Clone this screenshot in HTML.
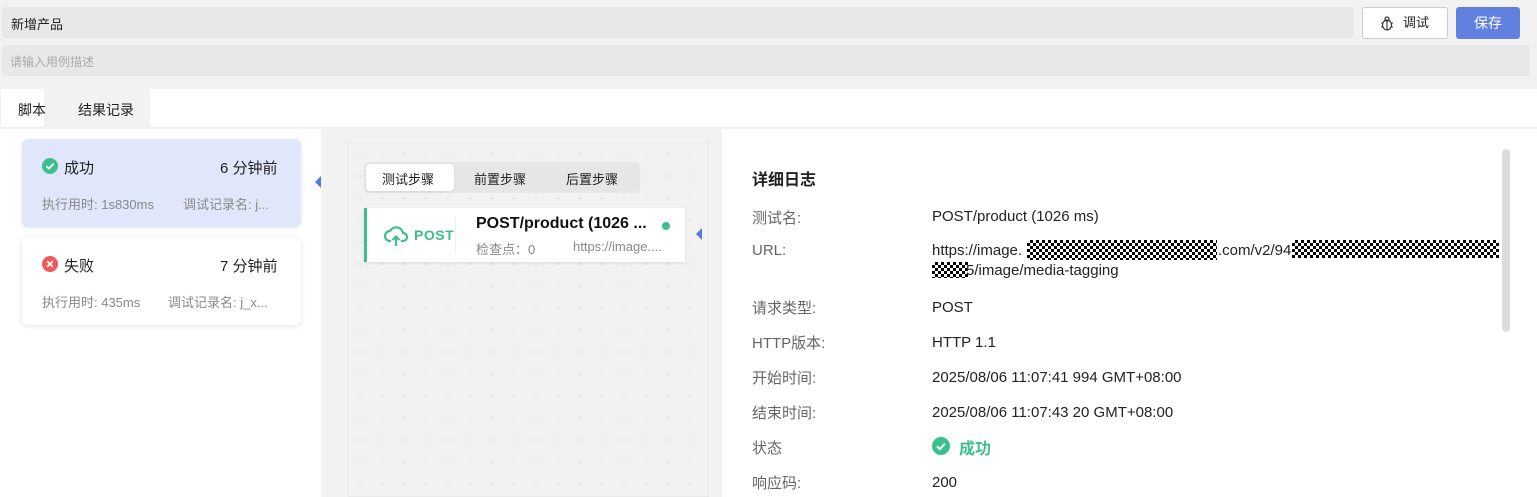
<!DOCTYPE html>
<html><head><meta charset="utf-8"><style>
*{box-sizing:border-box;margin:0;padding:0}
body{width:1537px;height:497px;overflow:hidden;background:#f2f2f2;font-family:"Liberation Sans","Noto Sans CJK SC",sans-serif;position:relative;color:#222}
.abs{position:absolute}
.inp{background:#e8e8e8;border-radius:4px}
.chk{position:absolute;background:repeating-conic-gradient(#000 0 25%,#fff 0 50%) 0 0/6px 6px}
.lbl{position:absolute;left:752px;font-size:15px;color:#666}
.val{position:absolute;left:932px;font-size:15px;color:#222}
</style></head><body>
<div class="abs inp" style="left:2px;top:7px;width:1352px;height:31px"></div>
<div class="abs" style="left:11px;top:14px;font-size:13px;color:#222">新增产品</div>
<div class="abs" style="left:1362px;top:7px;width:86px;height:32px;background:#fff;border:1px solid #ccc;border-radius:3px;font-size:13px;line-height:30px;padding-left:40px">调试</div>
<svg class="abs" style="left:1380px;top:15px" width="14" height="16" viewBox="0 0 14 16"><ellipse cx="7" cy="10" rx="4.5" ry="5" fill="none" stroke="#333" stroke-width="1.2"/><circle cx="7" cy="4" r="2" fill="none" stroke="#333" stroke-width="1.2"/><path d="M7 6v9M1 8h2M11 8h2M1 12h2M11 12h2" stroke="#333" stroke-width="1.1"/></svg>
<div class="abs" style="left:1456px;top:7px;width:64px;height:32px;background:#6280e0;border-radius:3px;color:#fff;font-size:14px;line-height:32px;text-align:center">保存</div>
<div class="abs inp" style="left:2px;top:45px;width:1528px;height:31px"></div>
<div class="abs" style="left:10px;top:53px;font-size:12px;color:#aaa">请输入用例描述</div>
<div class="abs" style="left:1px;top:89px;width:1536px;height:39px;background:#fff;border-bottom:1px solid #eee"></div>
<div class="abs" style="left:44px;top:89px;width:106px;height:39px;background:#f2f2f2"></div>
<div class="abs" style="left:18px;top:100px;font-size:14px">脚本</div>
<div class="abs" style="left:78px;top:100px;font-size:14px">结果记录</div>
<div class="abs" style="left:0;top:129px;width:321px;height:368px;background:#fff"></div>
<div class="abs" style="left:22px;top:139px;width:279px;height:88px;background:#e1e7fb;border-radius:6px;box-shadow:0 1px 4px rgba(0,0,0,.1)"></div>
<div class="abs" style="left:22px;top:237px;width:279px;height:88px;background:#fff;border-radius:6px;box-shadow:0 1px 6px rgba(0,0,0,.12)"></div>
<svg class="abs" style="left:42px;top:158px" width="16" height="16"><circle cx="8" cy="8" r="8" fill="#3cbf8d"/><path d="M4.5 8.2l2.4 2.4 4.6-4.8" stroke="#fff" stroke-width="1.8" fill="none"/></svg>
<div class="abs" style="left:64px;top:157px;font-size:15px">成功</div>
<div class="abs" style="left:220px;top:157px;font-size:15px">6 分钟前</div>
<div class="abs" style="left:42px;top:194px;font-size:13px;color:#888">执行用时: 1s830ms</div>
<div class="abs" style="left:183px;top:194px;font-size:13px;color:#888">调试记录名: j...</div>
<svg class="abs" style="left:42px;top:256px" width="16" height="16"><circle cx="8" cy="8" r="8" fill="#f05a5a"/><path d="M5.3 5.3l5.4 5.4M10.7 5.3l-5.4 5.4" stroke="#fff" stroke-width="1.8"/></svg>
<div class="abs" style="left:64px;top:255px;font-size:15px">失败</div>
<div class="abs" style="left:220px;top:255px;font-size:15px">7 分钟前</div>
<div class="abs" style="left:42px;top:292px;font-size:13px;color:#888">执行用时: 435ms</div>
<div class="abs" style="left:168px;top:292px;font-size:13px;color:#888">调试记录名: j_x...</div>
<div class="abs" style="left:315px;top:176px;width:0;height:0;border-top:6px solid transparent;border-bottom:6px solid transparent;border-right:6px solid #5a78dc"></div>
<div class="abs" style="left:348px;top:142px;width:361px;height:355px;border:1px solid #eaeaea;background-color:#f2f2f2;background-image:radial-gradient(#ddd 1px,transparent 1px);background-size:22px 22px"></div>
<div class="abs" style="left:364px;top:162px;width:276px;height:31px;background:#e6e6e6;border-radius:4px"></div>
<div class="abs" style="left:366px;top:164px;width:88px;height:27px;background:#fff;border-radius:4px;box-shadow:0 1px 2px rgba(0,0,0,.08)"></div>
<div class="abs" style="left:382px;top:169px;font-size:13px">测试步骤</div>
<div class="abs" style="left:474px;top:169px;font-size:13px">前置步骤</div>
<div class="abs" style="left:566px;top:169px;font-size:13px">后置步骤</div>
<div class="abs" style="left:364px;top:208px;width:321px;height:54px;background:#fff;border-left:3px solid #3cbf8d;box-shadow:0 1px 3px rgba(0,0,0,.1)"></div>
<div class="abs" style="left:455px;top:216px;width:1px;height:38px;background:#eee"></div>
<svg class="abs" style="left:384px;top:225px" width="24" height="22" viewBox="0 0 24 22"><path d="M7 16H6a5 5 0 0 1 0-10 7 7 0 0 1 13 2 4 4 0 0 1 0 8h-2" fill="none" stroke="#3cbf8d" stroke-width="2.2"/><path d="M12 21v-9M8.5 15l3.5-3.5 3.5 3.5" fill="none" stroke="#3cbf8d" stroke-width="2.2"/></svg>
<div class="abs" style="left:414px;top:227px;font-size:14px;font-weight:bold;color:#3cbf8d;letter-spacing:0.5px">POST</div>
<div class="abs" style="left:476px;top:215px;font-size:16px;font-weight:bold;color:#111">POST/product (1026 ...</div>
<div class="abs" style="left:662px;top:222px;width:8px;height:8px;border-radius:50%;background:#3cbf8d"></div>
<div class="abs" style="left:476px;top:239px;font-size:13px;color:#888">检查点：0</div>
<div class="abs" style="left:573px;top:239px;font-size:13px;color:#888">https://image....</div>
<div class="abs" style="left:696px;top:228px;width:0;height:0;border-top:6px solid transparent;border-bottom:6px solid transparent;border-right:6px solid #5a78dc"></div>
<div class="abs" style="left:722px;top:129px;width:815px;height:368px;background:#fff"></div>
<div class="abs" style="left:1502px;top:149px;width:8px;height:183px;background:#dcdcdc;border-radius:4px"></div>
<div class="abs" style="left:752px;top:166px;font-size:16px;font-weight:bold;color:#222">详细日志</div>
<div class="lbl" style="top:207px">测试名:</div><div class="val" style="top:208px">POST/product (1026 ms)</div>
<div class="lbl" style="top:242px">URL:</div>
<div class="val" style="top:242px">https://image.</div>
<div class="chk" style="left:1027px;top:240px;width:190px;height:20px"></div>
<div class="val" style="left:1218px;top:242px">.com/v2/94</div>
<div class="chk" style="left:1292px;top:240px;width:207px;height:18px"></div>
<div class="chk" style="left:932px;top:262px;width:36px;height:16px"></div>
<div class="val" style="left:966px;top:262px">5/image/media-tagging</div>
<div class="lbl" style="top:297px">请求类型:</div><div class="val" style="top:299px">POST</div>
<div class="lbl" style="top:332px">HTTP版本:</div><div class="val" style="top:334px">HTTP 1.1</div>
<div class="lbl" style="top:367px">开始时间:</div><div class="val" style="top:369px">2025/08/06 11:07:41 994 GMT+08:00</div>
<div class="lbl" style="top:402px">结束时间:</div><div class="val" style="top:404px">2025/08/06 11:07:43 20 GMT+08:00</div>
<div class="lbl" style="top:437px">状态</div>
<svg class="abs" style="left:932px;top:437px" width="18" height="18"><circle cx="9" cy="9" r="9" fill="#3cbf8d"/><path d="M5 9.3l2.8 2.8 5.2-5.4" stroke="#fff" stroke-width="2" fill="none"/></svg>
<div class="abs" style="left:959px;top:435px;font-size:16px;font-weight:bold;color:#3cbf8d">成功</div>
<div class="lbl" style="top:472px">响应码:</div><div class="val" style="top:474px">200</div>
</body></html>
